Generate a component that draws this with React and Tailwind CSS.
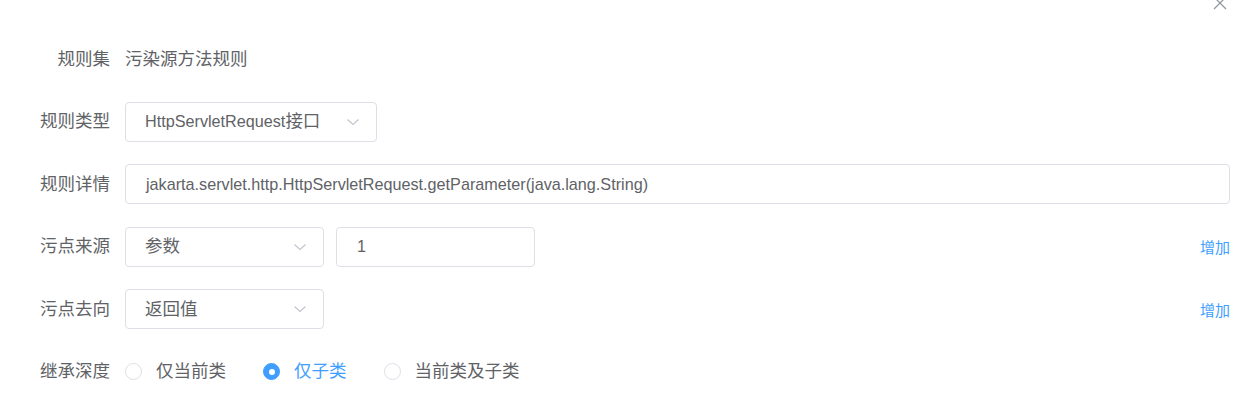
import React, { useState } from "react";

const font = { fontFamily: '"Liberation Sans", "Noto Sans CJK SC", sans-serif' };

const Chevron = () => (
  <svg width="14" height="14" viewBox="0 0 14 14" className="text-[#c0c4cc]">
    <path d="M1.5 4.5 L7 9.5 L12.5 4.5" fill="none" stroke="currentColor" strokeWidth="1.1" />
  </svg>
);

const Select = ({ children, width }) => (
  <div
    className={`h-10 ${width} flex items-center justify-between pl-[19px] pr-[16px] border border-[#dcdfe6] rounded-[4px] bg-white`}
  >
    <span>{children}</span>
    <Chevron />
  </div>
);

const Row = ({ label, children, last }) => (
  <div className={`flex items-center h-10 ${last ? "" : "mb-[22.5px]"}`}>
    <div className="w-[110px] text-right shrink-0">{label}</div>
    <div className="ml-[15px] flex-1 flex items-center">{children}</div>
  </div>
);

const Radio = ({ checked, label, onClick }) => (
  <label className="flex items-center cursor-pointer mr-[37px]" onClick={onClick}>
    <span
      className={`w-[17px] h-[17px] rounded-full border flex items-center justify-center ${
        checked ? "bg-[#409eff] border-[#409eff]" : "border-[#dcdfe6] bg-white"
      }`}
    >
      {checked && <span className="w-[6px] h-[6px] rounded-full bg-white" />}
    </span>
    <span className={`ml-[14px] ${checked ? "text-[#409eff]" : ""}`}>{label}</span>
  </label>
);

export default function App() {
  const [depth, setDepth] = useState(1);
  const options = ["仅当前类", "仅子类", "当前类及子类"];

  return (
    <div className="relative w-[1251px] h-[408px] bg-white text-[#606266] text-[17.5px] overflow-hidden" style={font}>
      <button className="absolute right-[24px] top-[-4px] text-[#909399]">
        <svg width="14" height="14" viewBox="0 0 14 14">
          <path d="M1 1 L13 13 M13 1 L1 13" stroke="currentColor" strokeWidth="1.2" />
        </svg>
      </button>

      <div className="pt-[39px] pr-[21px]">
        <Row label="规则集">
          <span>污染源方法规则</span>
        </Row>
        <Row label="规则类型">
          <Select width="w-[252px]">
            <span className="text-[16.2px]">HttpServletRequest</span>接口
          </Select>
        </Row>
        <Row label="规则详情">
          <div className="h-10 flex-1 flex items-center pl-[20px] border border-[#dcdfe6] rounded-[4px] text-[16.2px]">
            jakarta.servlet.http.HttpServletRequest.getParameter(java.lang.String)
          </div>
        </Row>
        <Row label="污点来源">
          <Select width="w-[199px]">参数</Select>
          <div className="h-10 w-[199px] ml-3 flex items-center pl-[20px] border border-[#dcdfe6] rounded-[4px] text-[16.2px]">
            1
          </div>
          <span className="ml-auto pt-[4px] text-[#409eff] text-[15px]">增加</span>
        </Row>
        <Row label="污点去向">
          <Select width="w-[199px]">返回值</Select>
          <span className="ml-auto pt-[4px] text-[#409eff] text-[15px]">增加</span>
        </Row>
        <Row label="继承深度" last>
          {options.map((o, i) => (
            <Radio key={o} label={o} checked={depth === i} onClick={() => setDepth(i)} />
          ))}
        </Row>
      </div>
    </div>
  );
}
